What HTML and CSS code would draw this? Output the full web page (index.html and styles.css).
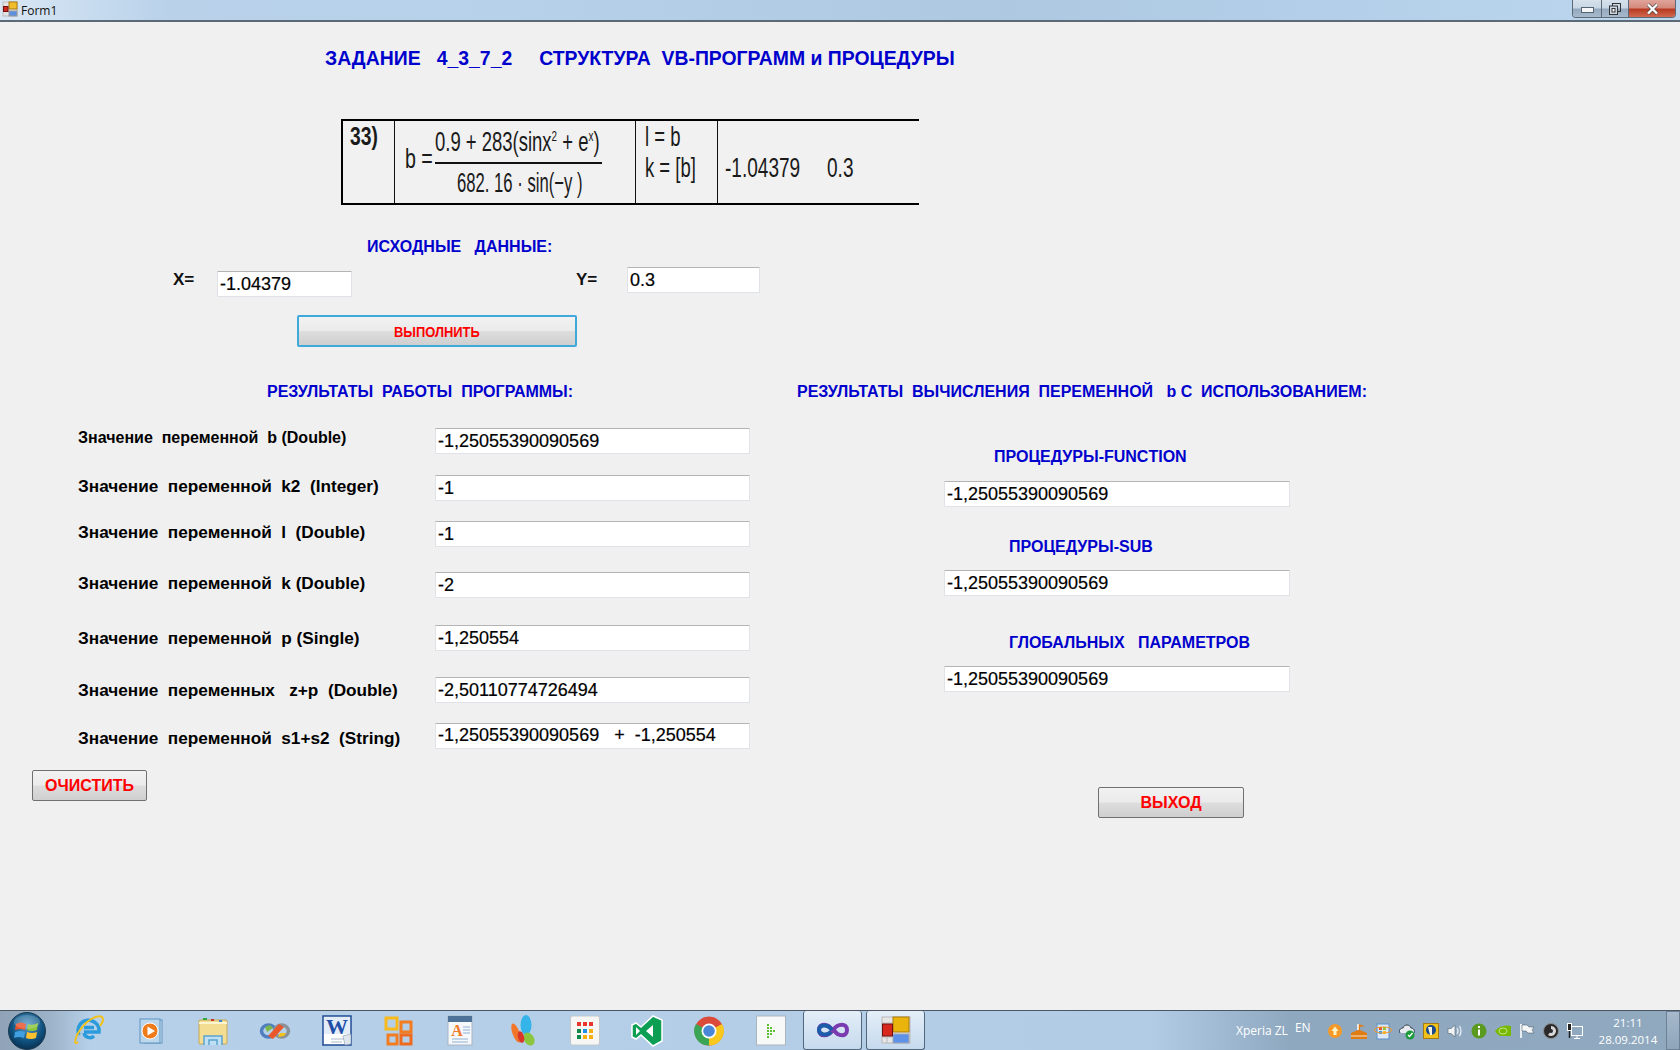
FILE: index.html
```html
<!DOCTYPE html>
<html lang="ru">
<head>
    <meta charset="UTF-8">
    <meta name="viewport" content="width=device-width, initial-scale=1.0">
    <title>Form1</title>
    <link rel="stylesheet" href="styles.css">
</head>
<body>
<div class="window">
    <div class="titlebar">
        <svg class="form-icon" width="16" height="16" viewBox="0 0 16 16">
            <rect x="1" y="1" width="14" height="14" fill="#e4e4e4" stroke="#bbb"/>
            <rect x="7" y="1" width="8" height="7" fill="#f2bd2c" stroke="#a87a10"/>
            <rect x="7" y="10" width="8" height="5" fill="#5d8fe0" stroke="#999"/>
            <rect x="1.500" y="5.500" width="4.500" height="5" fill="#d02a20" stroke="#701010"/>
        </svg>
        <span class="form-title">Form1</span>
        <div class="win-buttons">
            <div class="win-btn win-min"><span class="min-bar"></span></div>
            <div class="win-btn win-max">
                <svg width="12" height="12" viewBox="0 0 12 12"><rect x="3.500" y="0.500" width="8" height="8" fill="none" stroke="#333"/><rect x="0.500" y="3" width="8" height="8.500" fill="#cdd8e4" stroke="#333"/><rect x="3" y="5.500" width="3" height="3.500" fill="#fff" stroke="#333"/></svg>
            </div>
            <div class="win-btn win-close">
                <svg width="13" height="12" viewBox="0 0 13 12"><path d="M2 1.500 L11 10.500 M11 1.500 L2 10.500" stroke="#444" stroke-width="3.600"/><path d="M2 1.500 L11 10.500 M11 1.500 L2 10.500" stroke="#fff" stroke-width="2.400"/></svg>
            </div>
        </div>
    </div>

    <div class="form">
        <div class="task-title">ЗАДАНИЕ   4_3_7_2     СТРУКТУРА  VB-ПРОГРАММ и ПРОЦЕДУРЫ</div>

        <table class="formula-table">
            <tr>
                <td class="cell-num"><span class="thin num-text">33)</span></td>
                <td class="cell-formula">
                    <div class="formula">
                        <span class="thin f-lhs">b =</span>
                        <div class="fraction">
                            <div class="f-top"><span class="thin">0.9 + 283(sinx<sup>2</sup> + e<sup>x</sup>)</span></div>
                            <div class="f-bottom"><span class="thin">682. 16 · sin(−y )</span></div>
                        </div>
                    </div>
                </td>
                <td class="cell-vars"><span class="thin">l = b</span><span class="thin">k = [b]</span></td>
                <td class="cell-vals"><span class="thin val-x">-1.04379</span><span class="thin">0.3</span></td>
            </tr>
        </table>

        <div class="blue-head source-head">ИСХОДНЫЕ   ДАННЫЕ:</div>

        <div class="source-row">
            <div class="source-x">
                <span class="var-label">X=</span>
                <input class="box box-x" type="text" value="-1.04379">
            </div>
            <div class="source-y">
                <span class="var-label">Y=</span>
                <input class="box box-y" type="text" value="0.3">
            </div>
        </div>

        <button class="btn btn-run"><span class="run-label">ВЫПОЛНИТЬ</span></button>

        <div class="results">
            <div class="results-left">
                <div class="blue-head left-head">РЕЗУЛЬТАТЫ  РАБОТЫ  ПРОГРАММЫ:</div>
                <div class="val-list">
                    <div class="val-row r1"><span class="val-label">Значение  переменной  b (Double)</span><input class="box box-wide" type="text" value="-1,25055390090569"></div>
                    <div class="val-row r2"><span class="val-label">Значение  переменной  k2  (Integer)</span><input class="box box-wide" type="text" value="-1"></div>
                    <div class="val-row r3"><span class="val-label">Значение  переменной  l  (Double)</span><input class="box box-wide" type="text" value="-1"></div>
                    <div class="val-row r4"><span class="val-label">Значение  переменной  k (Double)</span><input class="box box-wide" type="text" value="-2"></div>
                    <div class="val-row r5"><span class="val-label">Значение  переменной  p (Single)</span><input class="box box-wide" type="text" value="-1,250554"></div>
                    <div class="val-row r6"><span class="val-label">Значение  переменных   z+p  (Double)</span><input class="box box-wide" type="text" value="-2,50110774726494"></div>
                    <div class="val-row r7"><span class="val-label">Значение  переменной  s1+s2  (String)</span><input class="box box-wide" type="text" value="-1,25055390090569   +  -1,250554"></div>
                </div>
                <button class="btn btn-clear">ОЧИСТИТЬ</button>
            </div>

            <div class="results-right">
                <div class="blue-head">РЕЗУЛЬТАТЫ  ВЫЧИСЛЕНИЯ  ПЕРЕМЕННОЙ   b С  ИСПОЛЬЗОВАНИЕМ:</div>
                <div class="blue-head proc-head proc-function">ПРОЦЕДУРЫ-FUNCTION</div>
                <input class="box box-proc" type="text" value="-1,25055390090569">
                <div class="blue-head proc-head proc-sub">ПРОЦЕДУРЫ-SUB</div>
                <input class="box box-proc" type="text" value="-1,25055390090569">
                <div class="blue-head proc-head proc-global">ГЛОБАЛЬНЫХ   ПАРАМЕТРОВ</div>
                <input class="box box-proc" type="text" value="-1,25055390090569">
                <button class="btn btn-exit">ВЫХОД</button>
            </div>
        </div>
    </div>

    <div class="taskbar">
        <div class="start-orb">
            <svg width="40" height="40" viewBox="0 0 40 40">
                <defs>
                    <radialGradient id="orb" cx="50%" cy="35%" r="70%"><stop offset="0" stop-color="#5a9fd0"/><stop offset="0.6" stop-color="#10527f"/><stop offset="1" stop-color="#062a48"/></radialGradient>
                </defs>
                <circle cx="20" cy="20" r="18.500" fill="url(#orb)" stroke="#1c3a50"/>
                <path d="M9 13 Q14 10 19 13 L18 19 Q13 17 8 19 Z" fill="#e8522a"/>
                <path d="M21 13 Q26 15 31 12 L30 19 Q25 21 20 19 Z" fill="#8cc63e"/>
                <path d="M8 21 Q13 19 18 21 L17 27 Q12 25 7 27 Z" fill="#3f9fe0"/>
                <path d="M20 21 Q25 23 30 21 L29 27 Q24 29 19 27 Z" fill="#fbc02d"/>
                <ellipse cx="20" cy="11" rx="13" ry="7" fill="#fff" opacity="0.180"/>
            </svg>
        </div>
        <div class="task-icons">
            <div class="task-item">
                <svg width="32" height="32" viewBox="0 0 32 32"><path d="M6 20 A10.500 10.500 0 1 1 26 17 H11 M11 12.500 H21 M21 21 A6 6 0 0 1 11 18" fill="none" stroke="#2b9bdc" stroke-width="3.500"/><path d="M5 27 C1 31 1 24 7 15 C13 6 24 -1 29 2 C31 4 30 7 27 11" fill="none" stroke="#f2c21a" stroke-width="2"/></svg>
            </div>
            <div class="task-item">
                <svg width="32" height="32" viewBox="0 0 32 32"><rect x="9" y="5" width="18" height="23" fill="#cfe2f2" stroke="#5f94c0"/><rect x="5" y="4" width="20" height="24" fill="#bcd6ec" stroke="#5f94c0"/><circle cx="15" cy="16" r="8" fill="#ef7a1a" stroke="#fff"/><path d="M12.500 11.500 L20 16 L12.500 20.500 Z" fill="#fff"/></svg>
            </div>
            <div class="task-item">
                <svg width="32" height="32" viewBox="0 0 32 32"><rect x="2" y="5" width="28" height="24" rx="1" fill="#f2dd92" stroke="#c5a955"/><path d="M2 8 H30" stroke="#fdf5cf" stroke-width="2"/><rect x="6" y="3" width="4" height="2" fill="#32a83c"/><rect x="14" y="4" width="3" height="2" fill="#c8302a"/><rect x="22" y="5" width="3" height="2" fill="#3c7fd0"/><path d="M7 30 V21 H25 V30 M12 30 V25 H20 V30" fill="#bfe0f2" stroke="#5ea3cf" stroke-width="1.500"/></svg>
            </div>
            <div class="task-item">
                <svg width="32" height="32" viewBox="0 0 32 32"><ellipse cx="9.500" cy="16" rx="7" ry="6" fill="none" stroke="#4f7fbf" stroke-width="3.500"/><ellipse cx="22.500" cy="16" rx="7" ry="6" fill="none" stroke="#8a9299" stroke-width="3.500"/><path d="M6 12 L11 10 L14 13 L8 17 Z" fill="#7ab648"/><path d="M19 22 L25 21 L27 18 L21 18 Z" fill="#f2c21a"/><path d="M9 21 L20 9 L25 12 L14 24 Z" fill="#e8582a"/></svg>
            </div>
            <div class="task-item">
                <svg width="32" height="32" viewBox="0 0 32 32"><rect x="2" y="1" width="28" height="29" fill="#fff" stroke="#1f4a94" stroke-width="1.500"/><rect x="3" y="2" width="26" height="17" fill="#e4ecf7"/><text x="16" y="19" class="word-w">W</text><path d="M10 24 H24 M10 27 H21" stroke="#a8b8cc"/><path d="M22 21 L30 19 L30 29 L24 30 Z" fill="#dfe6ee" stroke="#8797a8" stroke-width="0.600"/></svg>
            </div>
            <div class="task-item">
                <svg width="32" height="32" viewBox="0 0 32 32"><rect x="3" y="3" width="11" height="11" fill="none" stroke="#f8b91c" stroke-width="3"/><rect x="18" y="7" width="10" height="10" fill="none" stroke="#f47c20" stroke-width="3"/><rect x="5" y="20" width="9" height="9" fill="none" stroke="#f47c20" stroke-width="3"/><rect x="18" y="20" width="10" height="9" fill="none" stroke="#ee6a1f" stroke-width="3"/></svg>
            </div>
            <div class="task-item">
                <svg width="32" height="32" viewBox="0 0 32 32"><rect x="3" y="1" width="24" height="29" fill="#f6f8fb" stroke="#a9b5c2"/><rect x="3" y="1" width="24" height="6" fill="#4d7297"/><text x="12" y="21" class="book-a">A</text><path d="M18 12 H25 M18 15 H25 M18 18 H25 M7 24 H23 M7 27 H23" stroke="#8fb0d4"/></svg>
            </div>
            <div class="task-item">
                <svg width="32" height="32" viewBox="0 0 32 32"><ellipse cx="19" cy="10" rx="5.500" ry="10" fill="#34b4e8"/><ellipse cx="9" cy="18" rx="3.500" ry="10" transform="rotate(-20 9 18)" fill="#f2762a"/><ellipse cx="22" cy="24" rx="5" ry="7" transform="rotate(-30 22 24)" fill="#8cc63e"/><ellipse cx="14" cy="22" rx="3" ry="6" transform="rotate(-15 14 22)" fill="#d8362a"/></svg>
            </div>
            <div class="task-item">
                <svg width="32" height="32" viewBox="0 0 32 32"><rect x="1.500" y="1" width="29" height="29" rx="2" fill="#f6f6f4" stroke="#c4c8cc"/><rect x="8" y="7" width="4" height="4" fill="#e8362c"/><rect x="14" y="7" width="4" height="4" fill="#e8362c"/><rect x="20" y="7" width="4" height="4" fill="#e8362c"/><rect x="8" y="14" width="4" height="4" fill="#0f8a4a"/><rect x="14" y="14" width="4" height="4" fill="#1e90e8"/><rect x="20" y="14" width="4" height="4" fill="#f8b010"/><rect x="8" y="20" width="4" height="4" fill="#0f8a4a"/><rect x="14" y="20" width="4" height="4" fill="#f8b010"/><rect x="20" y="20" width="4" height="4" fill="#f8b010"/></svg>
            </div>
            <div class="task-item">
                <svg width="32" height="32" viewBox="0 0 32 32"><path d="M22 1 L31 5 V26 L22 31 L10 20 L5 24 L1 22 V10 L5 8 L10 12 Z" fill="#0c9e52" stroke="#fff" stroke-width="1.500"/><path d="M22 10 L15 16 L22 22 Z M5 12 V20 L9 16 Z" fill="#fff"/></svg>
            </div>
            <div class="task-item">
                <svg width="32" height="32" viewBox="0 0 32 32"><circle cx="16" cy="16" r="14.500" fill="#dc4a3a"/><path d="M16 16 L29 9 A14.500 14.500 0 0 1 16 30.500 Z" fill="#f8c81e"/><path d="M16 16 L16 30.500 A14.500 14.500 0 0 1 3 9 Z" fill="#3aa655"/><circle cx="16" cy="16" r="7.500" fill="#fff"/><circle cx="16" cy="16" r="5.800" fill="#4a87d8"/></svg>
            </div>
            <div class="task-item">
                <svg width="32" height="32" viewBox="0 0 32 32"><rect x="1.500" y="1" width="29" height="29" fill="#f7f8f8" stroke="#aab4bc"/><path d="M12 9 h2 v2 h-2 z M12 12 h2 v2 h-2 z M12 15 h2 v2 h-2 z M12 18 h2 v2 h-2 z M12 21 h2 v2 h-2 z M15 12 h2 v2 h-2 z M15 15 h2 v2 h-2 z M15 18 h2 v2 h-2 z M18 15 h2 v2 h-2 z" fill="#5cc030"/></svg>
            </div>
            <div class="task-item active">
                <svg width="32" height="22" viewBox="0 0 32 22"><path d="M15 11 C11 4 2 4 2 11 C2 18 11 18 16 11 C21 4 30 4 30 11 C30 18 21 18 17 11" fill="none" stroke="#7a3bb0" stroke-width="4"/><path d="M15 11 C11 5 2 5 2 11 C2 16 10 17 14 13" fill="none" stroke="#1c5ca8" stroke-width="4"/></svg>
            </div>
            <div class="task-item active">
                <svg width="30" height="28" viewBox="0 0 30 28"><rect x="1" y="1" width="28" height="26" fill="#e6e6e6" stroke="#b8b8b8"/><path d="M1 7 H11 M1 21 H11 M6 21 V27" stroke="#b8b8b8"/><rect x="12" y="1" width="16" height="15" fill="#eab40c" stroke="#a87a10"/><rect x="12" y="18" width="16" height="9" fill="#5d92e8" stroke="#a0a8b4"/><rect x="1.500" y="8" width="10" height="12" fill="#d8281e" stroke="#701010"/></svg>
            </div>
        </div>

        <div class="tray">
            <span class="tray-text">Xperia ZL</span>
            <span class="tray-lang">EN</span>
            <div class="tray-icons">
                <svg width="16" height="16" viewBox="0 0 16 16"><circle cx="8" cy="8" r="7" fill="#f59a28"/><path d="M8 3.500 L11.500 8 H9.500 V12 H6.500 V8 H4.500 Z" fill="#fff3c8"/></svg>
                <svg width="18" height="18" viewBox="0 0 18 18"><path d="M1 17 V11 L8 8 V2 L15 4 L10 5 V8 L17 11 V17 Z" fill="#e07c14"/><path d="M8 2 V8" stroke="#fff" stroke-width="1.500"/><path d="M1 14 H17" stroke="#fff" stroke-width="0.800"/></svg>
                <svg width="18" height="18" viewBox="0 0 18 18"><rect x="3" y="2" width="12" height="15" fill="#dce8f6" stroke="#5d8fc8"/><rect x="5" y="5" width="3" height="3" fill="#e8522a"/><rect x="9" y="5" width="3" height="3" fill="#8cc63e"/><rect x="5" y="9" width="3" height="3" fill="#3f9fe0"/><rect x="9" y="9" width="3" height="3" fill="#fbc02d"/><ellipse cx="9" cy="8" rx="9" ry="3" fill="none" stroke="#f09a30"/></svg>
                <svg width="18" height="18" viewBox="0 0 18 18"><path d="M2 11 C0 7 4 6 5 6 C6 2 12 2 13 6 C16 6 17 9 16 11" fill="#e8ecf0" stroke="#32404c"/><circle cx="12" cy="13" r="4.500" fill="#1a9a3a"/><path d="M10 13 L11.500 14.500 L14.500 11" fill="none" stroke="#fff" stroke-width="1.400"/></svg>
                <svg width="16" height="16" viewBox="0 0 16 16"><rect x="0.500" y="0.500" width="15" height="15" fill="#f2c21a" stroke="#a87a10"/><circle cx="8" cy="7" r="5" fill="#1c4a8c"/><path d="M5 4 H9 V12 H7 Z" fill="#f8f4e0"/></svg>
                <svg width="16" height="16" viewBox="0 0 16 16"><path d="M1 5.500 H4 L8 2 V14 L4 10.500 H1 Z" fill="#f0f2f4" stroke="#55626e" stroke-width="0.600"/><path d="M10 5 Q12 8 10 11 M12.500 3 Q15.500 8 12.500 13" fill="none" stroke="#f0f2f4" stroke-width="1.200"/></svg>
                <svg width="16" height="16" viewBox="0 0 16 16"><circle cx="8" cy="8" r="7.500" fill="#5a9a1e"/><rect x="7" y="3" width="2" height="2" fill="#fff"/><rect x="7" y="6.500" width="2" height="6" fill="#fff"/></svg>
                <svg width="16" height="14" viewBox="0 0 16 14"><path d="M0 7 Q7 0 16 2 V12 H7 Q3 12 0 7 Z" fill="#76b900"/><ellipse cx="8" cy="7" rx="4" ry="3" fill="none" stroke="#c8e28c"/></svg>
                <svg width="16" height="16" viewBox="0 0 16 16"><path d="M2 1 V15" stroke="#fff" stroke-width="1.600"/><path d="M3 2 H8 L10 4 H15 L13 7 L15 10 H9 L7 8 H3 Z" fill="#f4f6f8" stroke="#42505c" stroke-width="0.500"/></svg>
                <svg width="16" height="16" viewBox="0 0 16 16"><circle cx="8" cy="8" r="7.500" fill="#2a2a2a" stroke="#8a8a8a"/><path d="M8 3 A5 5 0 1 1 5 12 L8 8 Z" fill="#d8d8d8"/><circle cx="8" cy="8" r="2" fill="#2a2a2a"/></svg>
                <svg width="16" height="16" viewBox="0 0 16 16"><rect x="4.500" y="3.500" width="11" height="9" fill="none" stroke="#fff"/><path d="M10 13 V15 M7 15.500 H13" stroke="#fff"/><rect x="0.500" y="0.500" width="4" height="7" fill="#222" stroke="#fff"/><path d="M2.500 8 V15" stroke="#222" stroke-width="1.500"/></svg>
            </div>
            <div class="clock"><span>21:11</span><span>28.09.2014</span></div>
            <div class="show-desktop"></div>
        </div>
    </div>
</div>
</body>
</html>
```

FILE: styles.css
```css
html, body {
    margin: 0;
    padding: 0;
}
body {
    font-family: "Liberation Sans", Arial, sans-serif;
    background-color: #f0f0f0;
}
.window {
    display: flex;
    flex-direction: column;
    height: 1050px;
    overflow: hidden;
}

/* title bar */
.titlebar {
    height: 20px;
    display: flex;
    align-items: center;
    flex-shrink: 0;
    padding-left: 2px;
    background: linear-gradient(90deg, #d9e7f4 0%, #b9d2ea 10%, #b7d1ea 30%, #aec8e2 60%, #b4cfe9 80%, #bcd6ee 100%);
    border-bottom: 2px solid #5c6a78;
}
.form-icon {
    margin-top: -2px;
}
.form-title {
    margin-left: 3px;
    font-family: "Open Sans", sans-serif;
    font-size: 12px;
    color: #111;
}
.win-buttons {
    margin-left: auto;
    margin-right: 4px;
    display: flex;
    height: 17px;
    align-self: flex-start;
    border: 1px solid #5c6a78;
    border-top: none;
    border-radius: 0 0 4px 4px;
    overflow: hidden;
}
.win-btn {
    display: flex;
    align-items: center;
    justify-content: center;
    border-left: 1px solid #5c6a78;
}
.win-min {
    width: 28px;
    border-left: none;
    background: linear-gradient(#d5e1ec 0%, #c8d6e4 48%, #94a8be 52%, #a8bacc 100%);
}
.min-bar {
    width: 11px;
    height: 4px;
    margin-top: 3px;
    background: #f4f6f8;
    border: 1px solid #566472;
}
.win-max {
    width: 26px;
    background: linear-gradient(#d5e1ec 0%, #c8d6e4 48%, #94a8be 52%, #a8bacc 100%);
}
.win-close {
    width: 46px;
    background: linear-gradient(#dfa49a 0%, #d48a7c 45%, #b83a22 55%, #d06a50 100%);
}

/* form body */
.form {
    flex: 1;
    min-height: 0;
    background-color: #f0f0f0;
}
.blue-head, .task-title {
    font-weight: bold;
    color: #0000cd;
    white-space: pre;
}
.blue-head {
    font-size: 16px;
    line-height: 20px;
}
.task-title {
    font-size: 19.400px;
    line-height: 22px;
    margin: 25px 0 0 325px;
}

/* formula scan */
.formula-table {
    border-collapse: collapse;
    table-layout: fixed;
    margin: 50px 0 0 341px;
    width: 578px;
    height: 86px;
    background-color: #f1f1f1;
    border-top: 2px solid #000;
    border-bottom: 2px solid #000;
    border-left: 2px solid #000;
}
.formula-table td {
    padding: 0;
    border-right: 1px solid #111;
    vertical-align: top;
    color: #1a1a1a;
    font-size: 28px;
}
.formula-table td:last-child {
    border-right: none;
}
.thin {
    display: inline-block;
    white-space: pre;
    transform-origin: left center;
    transform: scaleX(0.680);
}
.cell-num {
    width: 51px;
}
.cell-formula {
    width: 240px;
}
.cell-vars {
    width: 81px;
}
.num-text {
    display: block;
    font-weight: bold;
    font-size: 26px;
    line-height: 30px;
    margin-left: 7px;
    transform: scaleX(0.740);
}
.formula {
    display: flex;
    align-items: center;
    padding-left: 10px;
}
.f-lhs {
    width: 30px;
    margin-top: -6px;
    transform: scaleX(0.700);
}
.fraction {
    width: 167px;
}
.f-top {
    height: 41px;
    line-height: 41px;
    border-bottom: 2px solid #111;
}
.f-top .thin {
    transform: scaleX(0.660);
}
.f-top sup {
    font-size: 15px;
    line-height: 0;
}
.f-bottom {
    height: 38px;
    line-height: 38px;
    padding-left: 22px;
}
.f-bottom .thin {
    transform: scaleX(0.595);
}
.cell-vars .thin {
    display: block;
    margin-left: 9px;
    line-height: 31px;
    transform: scaleX(0.660);
}
.cell-vals {
    padding-top: 31px !important;
    line-height: 31px;
}
.val-x {
    width: 102px;
    margin-left: 7px;
}

/* inputs */
.box {
    display: block;
    box-sizing: border-box;
    height: 26px;
    padding: 0 2px;
    background-color: #fff;
    border: 1px solid #dfe3e8;
    border-top-color: #b4b4b4;
    border-radius: 1px;
    outline: none;
    font-family: "Liberation Sans", Arial, sans-serif;
    font-size: 18px;
    color: #000;
    white-space: pre;
    -webkit-text-stroke: 0.200px #000;
}
.box-x {
    width: 135px;
}
.box-y {
    width: 133px;
}
.box-wide {
    width: 315px;
}
.box-proc {
    width: 346px;
    margin-left: 147px;
    margin-top: 13px;
}
.proc-function + .box-proc {
    margin-top: 14px;
}

/* source data */
.source-head {
    margin: 32px 0 0 367px;
}
.source-row {
    display: flex;
    margin: 10px 0 0 173px;
}
.source-x, .source-y {
    display: flex;
}
.var-label {
    font-weight: bold;
    font-size: 17px;
    line-height: 20px;
    color: #111;
}
.source-x .var-label {
    width: 44px;
    padding-top: 3px;
}
.source-x .box {
    margin-top: 4px;
}
.source-y {
    margin-left: 224px;
}
.source-y .var-label {
    width: 51px;
    padding-top: 3px;
}

/* buttons */
.btn {
    display: block;
    box-sizing: border-box;
    font-family: "Liberation Sans", Arial, sans-serif;
    font-weight: bold;
    color: #ff0000;
    border: 1px solid #707070;
    border-radius: 2px;
    background: linear-gradient(#f2f2f2 0%, #ebebeb 48%, #dddddd 52%, #cfcfcf 100%);
    padding: 0;
}
.btn-run {
    width: 280px;
    height: 32px;
    margin: 18px 0 0 297px;
    font-size: 15px;
    border: 2px solid #3fa9dc;
}
.run-label {
    display: inline-block;
    transform: scaleX(0.860);
}
.btn-clear {
    width: 115px;
    height: 31px;
    margin: 21px 0 0 32px;
    font-size: 16px;
}
.btn-exit {
    width: 146px;
    height: 31px;
    margin: 95px 0 0 301px;
    font-size: 16px;
}

/* results */
.results {
    display: flex;
    margin-top: 35px;
}
.results-left {
    width: 797px;
    flex-shrink: 0;
}
.left-head {
    margin-left: 267px;
}
.val-list {
    margin: 26px 0 0 78px;
}
.val-row {
    display: grid;
    grid-template-columns: 357px 315px;
    align-items: center;
}
.val-label {
    font-weight: bold;
    font-size: 17.200px;
    color: #000;
    white-space: pre;
}
.r1 .val-label {
    font-size: 16px;
    margin-bottom: 6px;
}
.r2 .val-label, .r3 .val-label, .r4 .val-label {
    margin-bottom: 4px;
}
.r7 .val-label {
    margin-top: 6px;
}
.r2 { margin-top: 21px; }
.r3 { margin-top: 20px; }
.r4 { margin-top: 25px; }
.r5 { margin-top: 27px; }
.r6 { margin-top: 26px; }
.r7 { margin-top: 19px; }
.proc-function {
    margin: 45px 0 0 197px;
}
.proc-sub {
    margin: 30px 0 0 212px;
}
.proc-global {
    margin: 37px 0 0 212px;
}

/* taskbar */
.taskbar {
    height: 39px;
    flex-shrink: 0;
    display: flex;
    align-items: stretch;
    border-top: 1px solid #4a5663;
    background: linear-gradient(90deg, #8fa2b6 0%, #9cb2c8 50px, #b6d0e9 90px, #b4cee8 700px, #b2cce6 1150px, #8ea8c0 1290px, #90a9bf 100%);
}
.start-orb {
    width: 54px;
    display: flex;
    align-items: center;
    justify-content: center;
}
.task-icons {
    display: flex;
    margin-left: 4px;
}
.task-item {
    width: 62px;
    height: 39px;
    display: flex;
    align-items: center;
    justify-content: center;
}
.task-item.active {
    width: 59px;
    margin: 0 3px 0 1px;
    box-sizing: border-box;
    border: 1px solid #52667c;
    border-top: none;
    border-radius: 3px;
    background: linear-gradient(#e4eef8, #c6daee);
}
.word-w {
    font-family: "Liberation Serif", serif;
    font-size: 22px;
    font-weight: bold;
    fill: #1f4fa8;
    text-anchor: middle;
}
.book-a {
    font-family: "Liberation Serif", serif;
    font-size: 16px;
    font-weight: bold;
    fill: #ef7a2a;
    text-anchor: middle;
}
.tray {
    flex: 1;
    display: flex;
    align-items: center;
    color: #fff;
    font-family: "Open Sans", sans-serif;
    font-size: 12px;
}
.tray-text {
    margin-left: 308px;
}
.tray-lang {
    margin: -6px 0 0 7px;
}
.tray-icons {
    display: grid;
    grid-auto-flow: column;
    grid-auto-columns: 24px;
    justify-items: center;
    align-items: center;
    margin-left: 12px;
}
.clock {
    display: flex;
    flex-direction: column;
    align-items: center;
    margin-left: 12px;
    font-size: 11.500px;
    line-height: 17px;
}
.show-desktop {
    width: 14px;
    height: 100%;
    margin-left: auto;
    box-sizing: border-box;
    border: 1px solid #6c8096;
    background: linear-gradient(#a7b9cb, #8ea5bb);
}
```
